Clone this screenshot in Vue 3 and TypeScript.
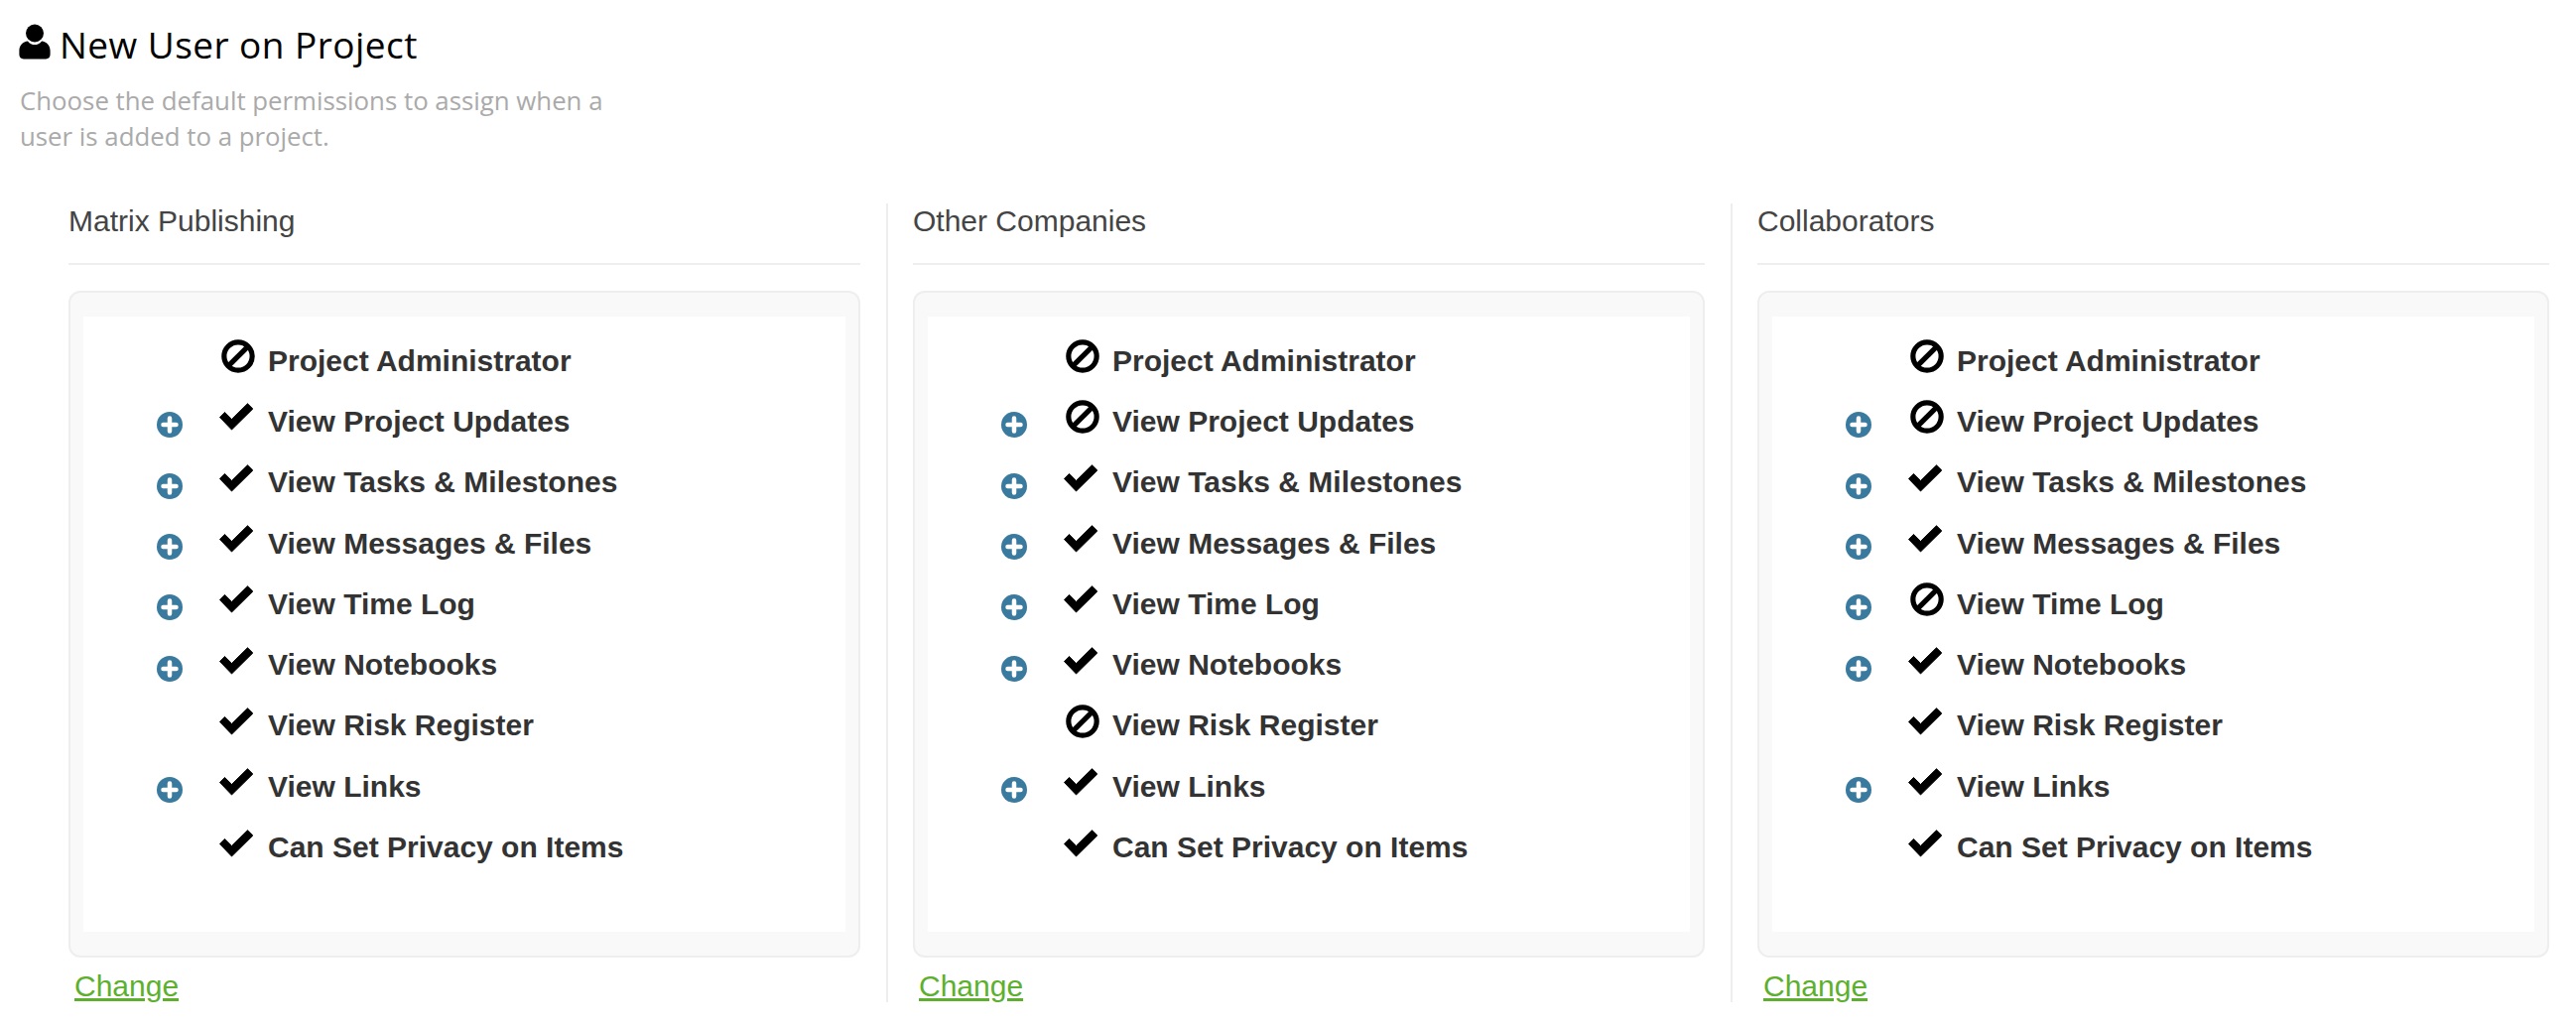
<script setup lang="ts">
type Perm = { label: string; on: boolean; more: boolean }

const labels: [string, boolean][] = [
  ['Project Administrator', false],
  ['View Project Updates', true],
  ['View Tasks & Milestones', true],
  ['View Messages & Files', true],
  ['View Time Log', true],
  ['View Notebooks', true],
  ['View Risk Register', false],
  ['View Links', true],
  ['Can Set Privacy on Items', false],
]

// which rows have the check, per column
function perms(on: boolean[]): Perm[] {
  return labels.map(([label, more], i) => ({ label, more, on: on[i] }))
}

const columns = [
  { name: 'Matrix Publishing', perms: perms([false, true, true, true, true, true, true, true, true]) },
  { name: 'Other Companies', perms: perms([false, false, true, true, true, true, false, true, true]) },
  { name: 'Collaborators', perms: perms([false, false, true, true, false, true, true, true, true]) },
]
</script>

<template>
  <div class="page">
    <h2 class="title">
      <svg class="user-icon" viewBox="0 0 32 36" aria-hidden="true">
        <circle cx="16" cy="9.5" r="9" />
        <path d="M9 17.5c2 2.6 4.4 3.6 7 3.6s5-1 7-3.6c5 .6 8.4 4 8.6 9.5v4c0 2.6-1.8 4.4-4.4 4.4H4.800C2.200 35.400.4 33.600.4 31v-4C.6 21.500 4 18.100 9 17.500z" />
      </svg>
      New User on Project
    </h2>
    <p class="desc">Choose the default permissions to assign when a user is added to a project.</p>

    <div class="columns">
      <section v-for="col in columns" :key="col.name" class="column">
        <h3 class="col-name">{{ col.name }}</h3>
        <div class="well">
          <ul class="perm-list">
            <li v-for="p in col.perms" :key="p.label" class="perm">
              <span class="more">
                <svg v-if="p.more" viewBox="0 0 26 26" aria-hidden="true">
                  <circle cx="13" cy="13" r="13" fill="#3a7a9f" />
                  <path d="M13 6.500v13M6.500 13h13" stroke="#fff" stroke-width="4.500" stroke-linecap="round" fill="none" />
                </svg>
              </span>
              <span class="state" :class="{ off: !p.on }">
                <svg v-if="p.on" viewBox="0 0 36 28" aria-hidden="true">
                  <path d="M1.500 14.500 6.500 9.500 13.500 16.500 29.500.8 34.800 6 13.500 27z" fill="#000" stroke="#000" stroke-width="1" stroke-linejoin="round" />
                </svg>
                <svg v-else viewBox="0 0 36 36" aria-hidden="true">
                  <circle cx="18" cy="18" r="15" fill="none" stroke="#000" stroke-width="5.500" />
                  <path d="M8 28 28 8" stroke="#000" stroke-width="5.500" />
                </svg>
              </span>
              <span class="label">{{ p.label }}</span>
            </li>
          </ul>
        </div>
        <a class="change" href="#" @click.prevent>Change</a>
      </section>
    </div>
  </div>
</template>

<style>
body { background: #fff; }
</style>

<style scoped>
.page { width: 2596px; height: 1036px; box-sizing: border-box; padding: 20px 0 0 20px; overflow: hidden; font-family: "Liberation Sans", Arial, sans-serif; }
.title { display: flex; align-items: center; gap: 9px; margin: 0 0 0 -1px; height: 48px; font-family: "Open Sans", sans-serif; font-weight: 400; font-size: 37px; letter-spacing: 0.45px; color: #000; }
.user-icon { width: 32px; height: 36px; fill: #000; margin-top: -4px; }
.desc { width: 600px; margin: 15px 0 0; font-family: "Open Sans", sans-serif; font-size: 25.8px; line-height: 36px; color: #aaa; }
.columns { display: flex; margin-top: 50px; margin-left: 49px; }
.column { width: 798px; padding-right: 26px; margin-right: 25px; border-right: 2px solid #eee; height: 805px; flex: none; position: relative; }
.column:last-child { border-right: none; margin-right: 0; padding-right: 0; }
.col-name { margin: 0; height: 62px; padding-top: 1px; box-sizing: border-box; border-bottom: 2px solid #eee; font-weight: 400; font-size: 30px; line-height: 34px; color: #444; }
.well { margin-top: 26px; height: 672px; box-sizing: border-box; padding: 24px 13px; background: #f9f9f9; border: 2px solid #eee; border-radius: 12px; }
.perm-list { list-style: none; margin: 0; padding: 14px 0 0; background: #fff; height: 100%; box-sizing: border-box; }
.perm { display: flex; align-items: center; height: 61.3px; }
.more { width: 26px; height: 26px; margin-left: 74px; margin-top: 7px; }
.more svg { display: block; width: 26px; height: 26px; }
.state { width: 36px; height: 36px; margin-left: 36px; margin-right: -1px; display: flex; align-items: center; justify-content: center; margin-top: -9px; }
.state svg { display: block; width: 36px; }
.state.off { transform: translateX(2px); }
.state.off svg { width: 34px; }
.label { margin-left: 15px; font-weight: 700; font-size: 30px; color: #333; white-space: nowrap; }
.change { display: inline-block; margin: 11px 0 0 6px; font-size: 30px; line-height: 36px; color: #5cb02d; text-decoration: underline; }
</style>
